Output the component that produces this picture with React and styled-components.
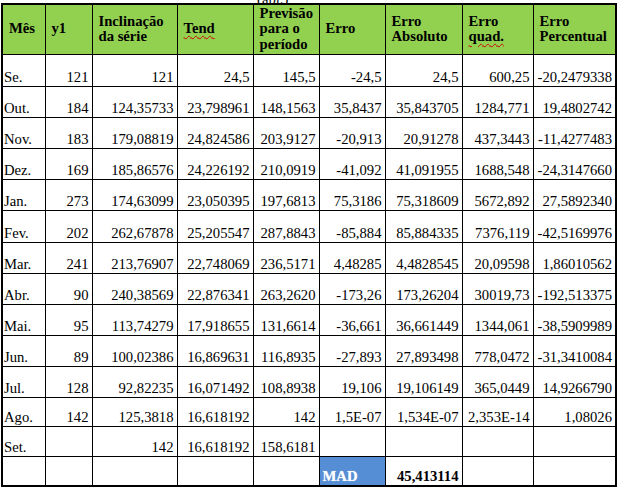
import React from 'react';
import styled, { createGlobalStyle } from 'styled-components';

const GlobalStyle = createGlobalStyle`
  body {
    margin: 0;
    background: #ffffff;
    font-family: "Liberation Serif", "Times New Roman", serif;
  }
`;

const columns = [43, 47, 85, 76, 66, 66, 77, 71, 83];

const rows = [
  { h: 32, cells: ['Se.', '121', '121', '24,5', '145,5', '-24,5', '24,5', '600,25', '-20,2479338'] },
  { h: 31, cells: ['Out.', '184', '124,35733', '23,798961', '148,1563', '35,8437', '35,843705', '1284,771', '19,4802742'] },
  { h: 31, cells: ['Nov.', '183', '179,08819', '24,824586', '203,9127', '-20,913', '20,91278', '437,3443', '-11,4277483'] },
  { h: 31, cells: ['Dez.', '169', '185,86576', '24,226192', '210,0919', '-41,092', '41,091955', '1688,548', '-24,3147660'] },
  { h: 31, cells: ['Jan.', '273', '174,63099', '23,050395', '197,6813', '75,3186', '75,318609', '5672,892', '27,5892340'] },
  { h: 32, cells: ['Fev.', '202', '262,67878', '25,205547', '287,8843', '-85,884', '85,884335', '7376,119', '-42,5169976'] },
  { h: 31, cells: ['Mar.', '241', '213,76907', '22,748069', '236,5171', '4,48285', '4,4828545', '20,09598', '1,86010562'] },
  { h: 31, cells: ['Abr.', '90', '240,38569', '22,876341', '263,2620', '-173,26', '173,26204', '30019,73', '-192,513375'] },
  { h: 31, cells: ['Mai.', '95', '113,74279', '17,918655', '131,6614', '-36,661', '36,661449', '1344,061', '-38,5909989'] },
  { h: 31, cells: ['Jun.', '89', '100,02386', '16,869631', '116,8935', '-27,893', '27,893498', '778,0472', '-31,3410084'] },
  { h: 31, cells: ['Jul.', '128', '92,82235', '16,071492', '108,8938', '19,106', '19,106149', '365,0449', '14,9266790'] },
  { h: 29, cells: ['Ago.', '142', '125,3818', '16,618192', '142', '1,5E-07', '1,534E-07', '2,353E-14', '1,08026'] },
  { h: 30, cells: ['Set.', '', '142', '16,618192', '158,6181', '', '', '', ''] },
];

function App() {
  return (
    <>
      <GlobalStyle />
      <Page>
        <Caption>
          <span>(apl.)</span>
        </Caption>
        <Sheet>
          <colgroup>
            {columns.map((w, i) => (
              <col key={i} style={{ width: w }} />
            ))}
          </colgroup>
          <thead>
            <HeadRow>
              <HeadCell>Mês</HeadCell>
              <HeadCell>y1</HeadCell>
              <HeadCell>Inclinação<br />da série</HeadCell>
              <HeadCell><Misspelled>Tend</Misspelled></HeadCell>
              <HeadCell>Previsão<br />para o<br />período</HeadCell>
              <HeadCell>Erro</HeadCell>
              <HeadCell>Erro<br />Absoluto</HeadCell>
              <HeadCell>Erro<br /><Misspelled>quad.</Misspelled></HeadCell>
              <HeadCell>Erro<br />Percentual</HeadCell>
            </HeadRow>
          </thead>
          <tbody>
            {rows.map((row) => (
              <Row key={row.cells[0]} $h={row.h}>
                {row.cells.map((c, i) => (
                  <Cell key={i} $left={i === 0}>{c}</Cell>
                ))}
              </Row>
            ))}
            <Row $h={30}>
              <Cell />
              <Cell />
              <Cell />
              <Cell />
              <Cell />
              <MadCell>MAD</MadCell>
              <Cell $bold>45,413114</Cell>
              <Cell />
              <Cell />
            </Row>
          </tbody>
        </Sheet>
      </Page>
    </>
  );
}

const Page = styled.div`
  width: 624px;
  height: 488px;
  overflow: hidden;
  padding-left: 1px;
  box-sizing: border-box;
`;

const Caption = styled.div`
  height: 3px;
  overflow: hidden;
  display: flex;
  align-items: flex-end;
  padding-left: 256px;
  font-size: 11pt;

  span {
    line-height: 14px;
    margin-bottom: -3px;
  }
`;

const Sheet = styled.table`
  border-collapse: collapse;
  table-layout: fixed;
  width: 614px;
  font-family: "Liberation Serif", "Times New Roman", serif;
  font-size: 11pt;
  color: #000000;
  border: 2px solid #000000;
`;

const HeadRow = styled.tr`
  height: 50px;
  background: #92d050;
`;

const HeadCell = styled.th`
  border: 1px solid #000000;
  padding: 0 2px 0 6px;
  text-align: left;
  vertical-align: middle;
  font-weight: bold;
  line-height: 15.7px;
  white-space: nowrap;
  overflow: visible;
`;

const Misspelled = styled.span`
  text-decoration: underline wavy #d00000;
  text-decoration-thickness: 1px;
  text-underline-offset: 2px;
`;

const Row = styled.tr`
  height: ${(p) => p.$h}px;
`;

const Cell = styled.td`
  border: 1px solid #000000;
  padding: ${(p) => (p.$left ? '0 0 0 1px' : '0 3px 0 0')};
  text-align: ${(p) => (p.$left ? 'left' : 'right')};
  vertical-align: bottom;
  line-height: 17px;
  white-space: nowrap;
  font-weight: ${(p) => (p.$bold ? 'bold' : 'normal')};
`;

const MadCell = styled.td`
  border: 1px solid #000000;
  background: #558ed5;
  color: #ffffff;
  font-weight: bold;
  padding: 0 0 0 3px;
  vertical-align: bottom;
  line-height: 17px;
  text-shadow: 0 0 1px #c9d7ea;
`;

export default App;
